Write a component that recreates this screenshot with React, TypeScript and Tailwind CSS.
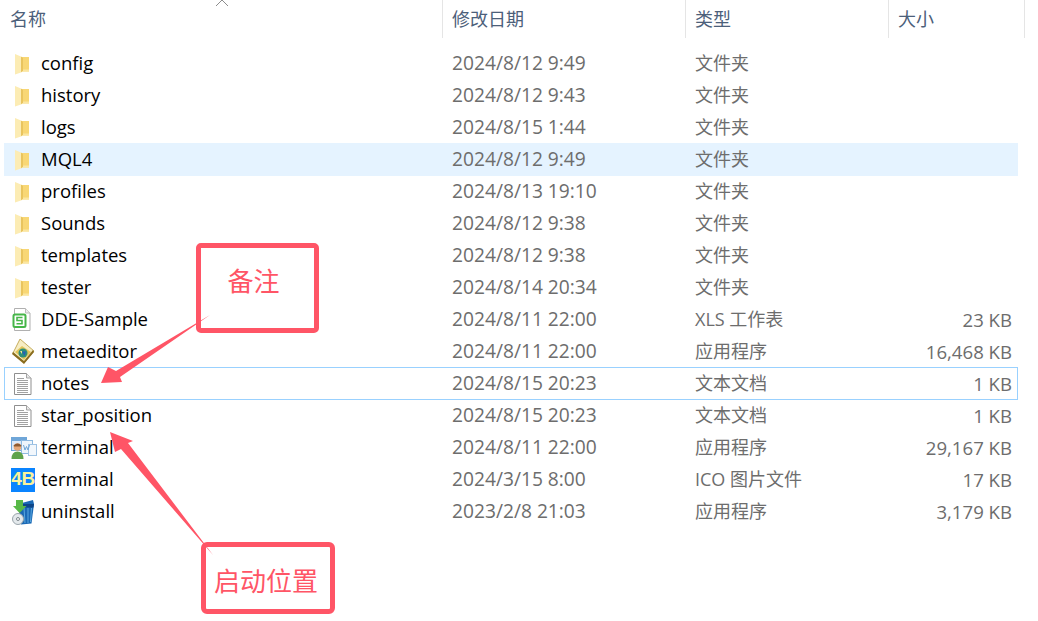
const FONT = '"Open Sans", "Noto Sans CJK SC", sans-serif';

function FolderIcon() {
  return (
    <svg width="18" height="22" viewBox="0 0 18 22">
      <path d="M6 4h9v14.500H6z" fill="#f8d775" />
      <path d="M7 16.500h8v2H7z" fill="#fbe6a2" />
      <path d="M1 1l6 2.500V19.500L1 21.500z" fill="#fcecb4" />
      <path d="M7 3.500 9 5V17.500L7 19.500z" fill="#e9c45e" />
    </svg>
  );
}

function DocIcon() {
  return (
    <svg width="18" height="22" viewBox="0 0 18 22">
      <path d="M.5.5h12l4.500 4.500v16.500H.5z" fill="#fff" stroke="#8f8f8f" />
      <path d="M12.500.5V5H17" fill="#e9e9e9" stroke="#a5a5a5" />
      <path d="M3 5.500h7M3 7.500h11M3 9.500h11M3 11.500h11M3 13.500h11M3 15.500h11M3 17.500h11M3 19.500h11" stroke="#a2a2a2" />
    </svg>
  );
}

function SheetIcon() {
  return (
    <svg width="22" height="24" viewBox="0 0 22 24">
      <path d="M2.500.5h11l4.500 4.500V22.500H2.500z" fill="#fff" stroke="#b0b0b0" />
      <path d="M13.500.5V5H18" fill="#ececec" stroke="#bdbdbd" />
      <rect x="1.500" y="6.500" width="12" height="12.500" rx="1.500" fill="#fff" stroke="#46b649" strokeWidth="2" />
      <path d="M10.500 9.500H5v3h5v3.300H4.500" fill="none" stroke="#46b649" strokeWidth="1.600" />
    </svg>
  );
}

function EditorIcon() {
  return (
    <svg width="24" height="26" viewBox="0 0 24 26">
      <path d="M2 14 9 0l14 12-10 12z" fill="#f7edc4" stroke="#b89a3d" strokeWidth=".8" />
      <path d="M4 13 11 7l9 6-7 8z" fill="#e2c65a" />
      <path d="M1 15l12 10L23 13l-1-2-9 11L2 13z" fill="#8a6d1f" />
      <circle cx="12" cy="14" r="4.500" fill="#2e8f7a" />
      <path d="M11 12.500h4l-1.500 4.500z" fill="#2460b5" />
      <path d="M9 12h2v3z" fill="#f2e68c" />
    </svg>
  );
}

function TerminalExeIcon() {
  return (
    <svg width="26" height="22" viewBox="0 0 26 22" className="ml-px">
      <rect x=".5" y=".5" width="15" height="13" fill="#dce9f6" stroke="#6fa6d8" />
      <rect x="1" y="1" width="14" height="3" fill="#6fa6d8" />
      <rect x="10.500" y="3.500" width="11" height="13" fill="#eef5fb" stroke="#8db9e0" />
      <rect x="17.500" y="7.500" width="8" height="11" fill="#f2f7fc" stroke="#9fc3e4" />
      <path d="M12.500 8l1.500 5 1.500-3.500 1.500 3.500 1.500-5" fill="none" stroke="#6fa6d8" />
      <circle cx="6.500" cy="10" r="3.800" fill="#e5a878" />
      <path d="M2.500 8.500q4-4 8 0l-.5 1h-7z" fill="#8c5a30" />
      <path d="M.5 22q0-7.500 6-7.500t6 7.500z" fill="#5fa34a" />
    </svg>
  );
}

function IcoIcon() {
  return (
    <div className="flex h-6 w-6 items-center justify-center bg-[#0a84ff] font-['Liberation_Sans'] text-[19px] font-bold tracking-[-0.5px] text-[#fbf29a]">
      4B
    </div>
  );
}

function UninstallIcon() {
  return (
    <svg width="24" height="26" viewBox="0 0 24 26">
      <path d="M7 5l15-4 1 4-2.500 19.500L10 25.500z" fill="#1b69b5" />
      <path d="M7 5h16l-.5 3.500H8z" fill="#0e4688" />
      <path d="M13 9l1 15M17 9v15M20.500 9l-1 14" stroke="#5aa8e0" />
      <circle cx="7" cy="20" r="5.500" fill="#e4e9ec" stroke="#9aa5ab" />
      <circle cx="7" cy="20" r="1.500" fill="#fff" stroke="#7d878d" />
      <path d="M5 1h7v6h3.500L8.500 14 2 7h3z" fill="#58b947" />
    </svg>
  );
}

const rows = [
  { name: 'config', date: '2024/8/12 9:49', type: '文件夹', icon: <FolderIcon /> },
  { name: 'history', date: '2024/8/12 9:43', type: '文件夹', icon: <FolderIcon /> },
  { name: 'logs', date: '2024/8/15 1:44', type: '文件夹', icon: <FolderIcon /> },
  { name: 'MQL4', date: '2024/8/12 9:49', type: '文件夹', icon: <FolderIcon />, selected: true },
  { name: 'profiles', date: '2024/8/13 19:10', type: '文件夹', icon: <FolderIcon /> },
  { name: 'Sounds', date: '2024/8/12 9:38', type: '文件夹', icon: <FolderIcon /> },
  { name: 'templates', date: '2024/8/12 9:38', type: '文件夹', icon: <FolderIcon /> },
  { name: 'tester', date: '2024/8/14 20:34', type: '文件夹', icon: <FolderIcon /> },
  { name: 'DDE-Sample', date: '2024/8/11 22:00', type: 'XLS 工作表', size: '23 KB', icon: <SheetIcon /> },
  { name: 'metaeditor', date: '2024/8/11 22:00', type: '应用程序', size: '16,468 KB', icon: <EditorIcon /> },
  { name: 'notes', date: '2024/8/15 20:23', type: '文本文档', size: '1 KB', icon: <DocIcon />, focused: true },
  { name: 'star_position', date: '2024/8/15 20:23', type: '文本文档', size: '1 KB', icon: <DocIcon /> },
  { name: 'terminal', date: '2024/8/11 22:00', type: '应用程序', size: '29,167 KB', icon: <TerminalExeIcon /> },
  { name: 'terminal', date: '2024/3/15 8:00', type: 'ICO 图片文件', size: '17 KB', icon: <IcoIcon /> },
  { name: 'uninstall', date: '2023/2/8 21:03', type: '应用程序', size: '3,179 KB', icon: <UninstallIcon /> },
];

const headers = [
  { label: '名称', width: 'w-[443px]', pad: 'pl-[10px]' },
  { label: '修改日期', width: 'w-[243px]', pad: 'pl-[9px]' },
  { label: '类型', width: 'w-[203px]', pad: 'pl-[9px]' },
  { label: '大小', width: 'w-[136px]', pad: 'pl-[9px]' },
];

export default function App() {
  return (
    <div className="relative h-[621px] w-[1038px] overflow-hidden bg-white text-[18px]" style={{ fontFamily: FONT }}>
      {/* Column headers */}
      <div className="flex h-[38px]">
        {headers.map((h) => (
          <div key={h.label} className={`${h.width} ${h.pad} border-r border-[#e5e5e5] pt-[5px] leading-[28px] text-[#4c607a]`}>
            {h.label}
          </div>
        ))}
      </div>

      {/* Sort arrow */}
      <svg className="absolute left-[215px] top-0" width="14" height="7" viewBox="0 0 14 7">
        <path d="M1 6 7 0l6 6" fill="none" stroke="#8d8d8d" />
      </svg>

      {/* Rows */}
      <div className="ml-1 mt-[9px] w-[1014px]">
        {rows.map((r, i) => (
          <div
            key={i}
            className={`-mb-px flex h-[33px] items-center border ${
              r.selected ? 'border-transparent bg-[#e5f3ff]' : r.focused ? 'border-[#99d1ff]' : 'border-transparent'
            }`}
          >
            <div className="flex w-[36px] shrink-0 justify-center">{r.icon}</div>
            <div className="mb-[2px] w-[411px] shrink-0 text-[18.500px] text-black">{r.name}</div>
            <div className="w-[243px] shrink-0 text-[19.200px] text-[#6d6d6d]">{r.date}</div>
            <div className="w-[200px] shrink-0 text-[#6d6d6d]">{r.type}</div>
            <div className="flex-1 pr-[5px] text-right text-[18.600px] text-[#6d6d6d]">{r.size}</div>
          </div>
        ))}
      </div>

      {/* Arrows */}
      <svg className="absolute left-0 top-0" width="1038" height="621" viewBox="0 0 1038 621">
        <path d="M210 315 116 371 108 367 101 383 122 382 120 377z" fill="#ff5566" />
        <path d="M213 555 128 443 133 441 110 432 115 452 121 449z" fill="#ff5566" />
      </svg>

      {/* Callout boxes */}
      <div className="absolute left-[196px] top-[243px] flex h-[90px] w-[123px] justify-center rounded-[5px] border-[5px] border-[#ff5566] pt-[15px] pr-[8px] text-[26px] leading-[36px] text-[#ff5566]">
        备注
      </div>
      <div className="absolute left-[201px] top-[542px] flex h-[72px] w-[134px] justify-center rounded-[6px] border-[5px] border-[#ff5566] pt-[16px] pr-[4px] text-[26px] leading-[36px] text-[#ff5566]">
        启动位置
      </div>
    </div>
  );
}
